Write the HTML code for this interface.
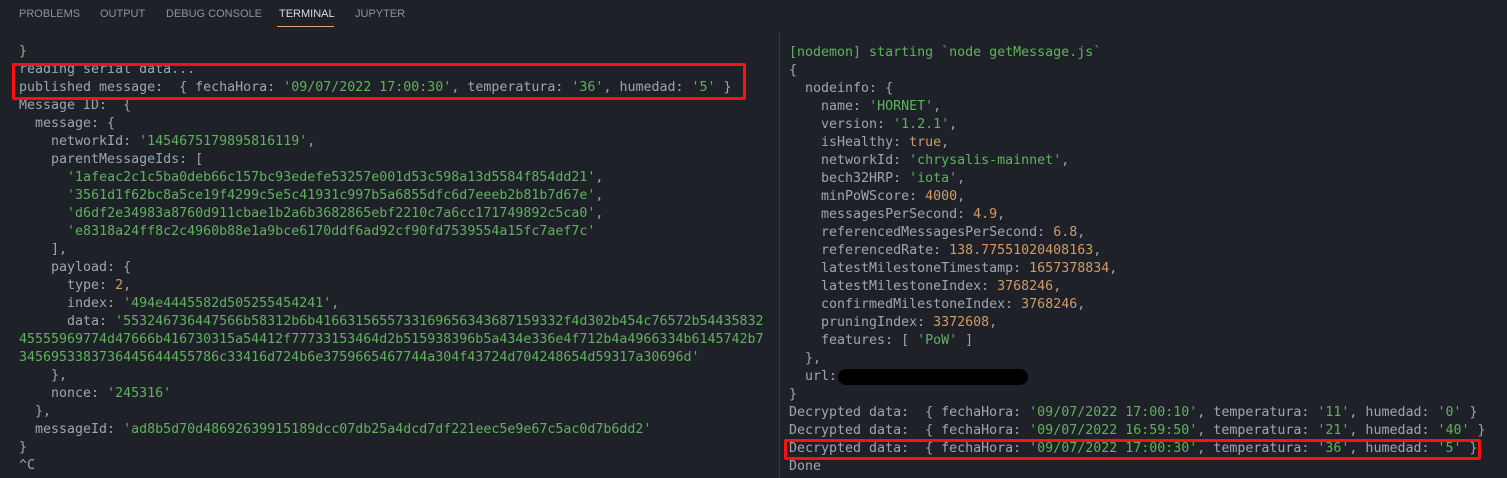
<!DOCTYPE html>
<html><head><meta charset="utf-8"><style>
body{margin:0;width:1507px;height:478px;background:#1e2228;overflow:hidden;position:relative;font-family:"DejaVu Sans Mono","Liberation Mono",monospace;}
.tabs{position:absolute;top:0;left:0;height:30px;font-family:"Liberation Sans",sans-serif;font-size:11px;color:#8b929c;}
.tabs span{position:absolute;top:8px;white-space:nowrap}
.tabs .act{color:#d7dae0}
.ul{position:absolute;left:277px;top:26px;width:57px;height:1px;background:#e0a080}
pre{position:absolute;margin:0;font:13.3px/18px "DejaVu Sans Mono","Liberation Mono",monospace;color:#9ca6b3;white-space:pre;}
.g{color:#5fb25d}.o{color:#d19a66}
.div{position:absolute;left:779px;top:32px;width:1px;height:446px;background:#33383f}
.box{position:absolute;border:3px solid #ff1010;border-radius:2px}
.blk{position:absolute;left:838px;top:369px;width:190px;height:16px;background:#000;border-radius:8px}
</style></head><body>
<div class="tabs">
<span style="left:19px">PROBLEMS</span>
<span style="left:100px">OUTPUT</span>
<span style="left:166px">DEBUG CONSOLE</span>
<span style="left:279px" class="act">TERMINAL</span>
<span style="left:355px">JUPYTER</span>
</div>
<div class="ul"></div>
<pre style="left:19px;top:43px">}
reading serial data...
published message:  { fechaHora: <span class="g">'09/07/2022 17:00:30'</span>, temperatura: <span class="g">'36'</span>, humedad: <span class="g">'5'</span> }
Message ID:  {
  message: {
    networkId: <span class="g">'1454675179895816119'</span>,
    parentMessageIds: [
      <span class="g">'1afeac2c1c5ba0deb66c157bc93edefe53257e001d53c598a13d5584f854dd21'</span>,
      <span class="g">'3561d1f62bc8a5ce19f4299c5e5c41931c997b5a6855dfc6d7eeeb2b81b7d67e'</span>,
      <span class="g">'d6df2e34983a8760d911cbae1b2a6b3682865ebf2210c7a6cc171749892c5ca0'</span>,
      <span class="g">'e8318a24ff8c2c4960b88e1a9bce6170ddf6ad92cf90fd7539554a15fc7aef7c'</span>
    ],
    payload: {
      type: <span class="o">2</span>,
      index: <span class="g">'494e4445582d505255454241'</span>,
      data: <span class="g">'553246736447566b58312b6b4166315655733169656343687159332f4d302b454c76572b54435832</span>
<span class="g">45555969774d47666b416730315a54412f77733153464d2b515938396b5a434e336e4f712b4a4966334b6145742b7</span>
<span class="g">3456953383736445644455786c33416d724b6e3759665467744a304f43724d704248654d59317a30696d'</span>
    },
    nonce: <span class="g">'245316'</span>
  },
  messageId: <span class="g">'ad8b5d70d48692639915189dcc07db25a4dcd7df221eec5e9e67c5ac0d7b6dd2'</span>
}
^C</pre>
<div class="div"></div>
<pre style="left:789px;top:44px"><span class="g">[nodemon] starting `node getMessage.js`</span>
{
  nodeinfo: {
    name: <span class="g">'HORNET'</span>,
    version: <span class="g">'1.2.1'</span>,
    isHealthy: <span class="o">true</span>,
    networkId: <span class="g">'chrysalis-mainnet'</span>,
    bech32HRP: <span class="g">'iota'</span>,
    minPoWScore: <span class="o">4000</span>,
    messagesPerSecond: <span class="o">4.9</span>,
    referencedMessagesPerSecond: <span class="o">6.8</span>,
    referencedRate: <span class="o">138.77551020408163</span>,
    latestMilestoneTimestamp: <span class="o">1657378834</span>,
    latestMilestoneIndex: <span class="o">3768246</span>,
    confirmedMilestoneIndex: <span class="o">3768246</span>,
    pruningIndex: <span class="o">3372608</span>,
    features: [ <span class="g">'PoW'</span> ]
  },
  url:
}
Decrypted data:  { fechaHora: <span class="g">'09/07/2022 17:00:10'</span>, temperatura: <span class="g">'11'</span>, humedad: <span class="g">'0'</span> }
Decrypted data:  { fechaHora: <span class="g">'09/07/2022 16:59:50'</span>, temperatura: <span class="g">'21'</span>, humedad: <span class="g">'40'</span> }
Decrypted data:  { fechaHora: <span class="g">'09/07/2022 17:00:30'</span>, temperatura: <span class="g">'36'</span>, humedad: <span class="g">'5'</span> }
Done</pre>
<div class="blk"></div>
<div class="box" style="left:12px;top:63px;width:728px;height:31px"></div>
<div class="box" style="left:784px;top:439px;width:691px;height:15px"></div>
</body></html>
